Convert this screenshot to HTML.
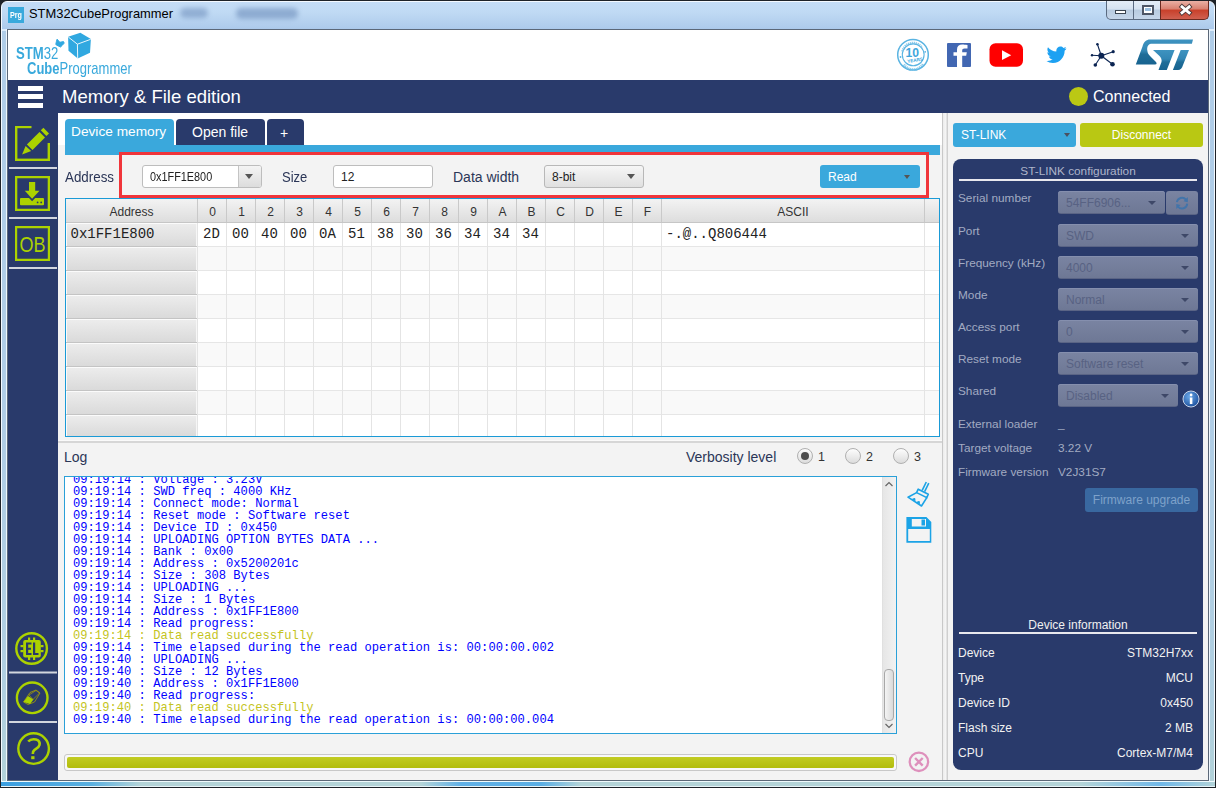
<!DOCTYPE html>
<html><head><meta charset="utf-8">
<style>
*{margin:0;padding:0;box-sizing:border-box}
html,body{width:1216px;height:788px;overflow:hidden;background:#6f8db0;font-family:"Liberation Sans",sans-serif}
.a{position:absolute}
.t{position:absolute;white-space:pre;line-height:1}
.mono{font-family:"Liberation Mono",monospace}
</style></head><body>
<!-- window frame -->
<div class="a" style="left:0;top:0;width:1216px;height:788px;background:#1e2228"></div>
<div class="a" style="left:1px;top:1px;width:1214px;height:786px;border-radius:6px 6px 0 0;background:linear-gradient(180deg,#c4dcf6 0px,#c0daf4 10px,#aecbec 26px,#a9c8ec 27px,#dcecfb 27.5px,#dcecfb 28.5px,#b0cde8 29px,#b0cde6 400px,#b0cfe0 700px,#b2d2d8 788px);border:1px solid #f4f9ff"></div>
<div class="a" style="left:180px;top:8px;width:28px;height:10px;border-radius:5px;background:#7d9cc6;filter:blur(2.5px);opacity:0.7"></div>
<div class="a" style="left:236px;top:8px;width:62px;height:11px;border-radius:5px;background:#7d9cc6;filter:blur(2.5px);opacity:0.75"></div>
<div class="a" style="left:1px;top:782px;width:1214px;height:5px;background:linear-gradient(90deg,#3a9ee0 0,#5ab0e0 90px,#b4d4d8 140px,#b4d4d8 420px,#60b0e6 460px,#5aaee4 540px,#b4d4d8 580px,#b4d4d8 1080px,#70b8e8 1160px,#b4d4d8 1216px)"></div>
<div class="a" style="left:1px;top:781px;width:1214px;height:1px;background:#f0fafc"></div>
<div class="a" style="left:1px;top:786px;width:1214px;height:1px;background:#e8f4f8"></div>
<div class="a" style="left:6px;top:29px;width:1px;height:753px;background:#eef6fd"></div>
<div class="a" style="left:1209px;top:29px;width:1px;height:753px;background:#eef6fd"></div>
<!-- titlebar -->
<div class="a" style="left:8px;top:7px;width:16px;height:16px;background:#39a9dc"></div>
<div class="t" style="left:10px;top:11px;font-size:9px;font-weight:bold;color:#fff;transform-origin:0 0;transform:scaleX(0.8)">Prg</div>
<div class="t" style="left:29px;top:8px;font-size:12.9px;color:#000">STM32CubeProgrammer</div>
<!-- window buttons -->
<div class="a" style="left:1106px;top:1px;width:28px;height:19px;border:1px solid #5a6a80;border-top:none;border-radius:0 0 0 5px;background:linear-gradient(180deg,#e4edf7 0,#d5e2f0 45%,#b8cbe0 50%,#c5d6ea 100%)"></div>
<div class="a" style="left:1133px;top:1px;width:28px;height:19px;border:1px solid #5a6a80;border-top:none;background:linear-gradient(180deg,#e4edf7 0,#d5e2f0 45%,#b8cbe0 50%,#c5d6ea 100%)"></div>
<div class="a" style="left:1160px;top:1px;width:49px;height:19px;border:1px solid #6a2a20;border-top:none;border-radius:0 0 5px 0;background:linear-gradient(180deg,#eab0a4 0,#d88070 45%,#c8402a 50%,#d06050 100%)"></div>
<div class="a" style="left:1115px;top:10px;width:11px;height:4px;background:#fff;border:1px solid #3a4450"></div>
<div class="a" style="left:1142px;top:5px;width:12px;height:10px;border:2px solid #4e5666;background:#fff"></div>
<div class="a" style="left:1145px;top:8px;width:6px;height:3px;background:#9cc0e0"></div>
<svg class="a" style="left:1176px;top:2px" width="20" height="16" viewBox="1176 2 20 16"><path d="M1182,6.8 L1189.2,12.8 M1189.2,6.8 L1182,12.8" stroke="#4a3838" stroke-width="4.6" stroke-linecap="square"/><path d="M1182,6.8 L1189.2,12.8 M1189.2,6.8 L1182,12.8" stroke="#fff" stroke-width="2.8" stroke-linecap="square"/></svg>

<!-- client area -->
<div class="a" style="left:7px;top:29px;width:1202px;height:752px;background:#fff;border:1px solid #5c6878"></div>
<!-- header white -->
<div class="a" id="header" style="left:8px;top:30px;width:1200px;height:50px;background:#fff"></div>
<!-- navy band -->
<div class="a" style="left:8px;top:80px;width:1200px;height:33px;background:#293a6b"></div>
<!-- sidebar -->
<div class="a" style="left:8px;top:113px;width:50px;height:667px;background:#293a6b"></div>
<!-- content bg -->
<div class="a" style="left:58px;top:113px;width:884px;height:667px;background:#f3f3f3"></div>
<div class="a" style="left:58px;top:113px;width:884px;height:32px;background:#fff"></div>
<!-- splitter -->
<div class="a" style="left:942px;top:113px;width:6px;height:667px;background:linear-gradient(90deg,#c8c8c8 0,#c8c8c8 1px,#ececec 1px,#f6f6f6 4px,#cfcfcf 5px)"></div>
<!-- right panel bg -->
<div class="a" style="left:948px;top:113px;width:260px;height:667px;background:#f3f3f3"></div>


<!-- logo -->
<div class="t" style="left:16.4px;top:45px;font-size:16.5px;color:#39a9dc;transform-origin:0 0;transform:scaleX(0.795);font-weight:bold">STM<span style="font-weight:normal">32</span></div>
<div class="t" style="left:27px;top:59.6px;font-size:17px;color:#39a9dc;transform-origin:0 0;transform:scaleX(0.765)"><b>Cube</b>Programmer</div>
<svg class="a" style="left:50px;top:30px" width="45" height="32" viewBox="50 30 45 32">
 <polygon points="80.3,32.8 90.9,39.1 90,52.8 77.7,58.5 68.5,50.7 68.1,36.7" fill="#30a8e0"/>
 <polyline points="68.3,37 77.4,44.2 90.7,39.3" fill="none" stroke="#fff" stroke-width="0.9"/>
 <line x1="77.4" y1="44.2" x2="77.7" y2="58.5" stroke="#fff" stroke-width="0.9"/>
 <path d="M57.1,39.2 L59.8,42.3 L63.5,41.6 L64.2,43.1 L62.3,45.3 L60.5,47 L57,45.3 L55.8,44.5 L56.4,41.5 Z" fill="#30a8e0" stroke="#30a8e0" stroke-width="1" stroke-linejoin="round"/>
</svg>
<!-- social -->
<svg class="a" style="left:890px;top:34px" width="320" height="44" viewBox="890 34 320 44">
 <circle cx="913" cy="54.8" r="15.3" fill="#fff" stroke="#5ab4e2" stroke-width="1.5"/>
 <circle cx="913.2" cy="54.8" r="10.9" fill="none" stroke="#5ab4e2" stroke-width="1.1"/>
 <path d="M903,50 A10.9,10.9 0 0 1 923,49" fill="none" stroke="#6dbde6" stroke-width="2.4" stroke-dasharray="1.2 0.7" transform="rotate(-8 913 54.8)" opacity="0.8"/>
 <path d="M904,61 A11,11 0 0 0 923,60" fill="none" stroke="#6dbde6" stroke-width="2.4" stroke-dasharray="1.2 0.7" transform="translate(0 3.5)" opacity="0.8"/>
 <circle cx="900.5" cy="57" r="0.9" fill="#5ab4e2"/><circle cx="925.2" cy="51.8" r="0.9" fill="#5ab4e2"/>
 <text x="912.2" y="57.4" font-family="Liberation Sans" font-weight="bold" font-size="12.8" fill="#3ea6dc" text-anchor="middle" transform="translate(912 0) scale(0.95 1) translate(-912 0)">10</text>
 <text x="915" y="61.8" font-family="Liberation Sans" font-weight="bold" font-size="4.6" fill="#3ea6dc" text-anchor="middle" transform="rotate(-8 915 60)">YEARS</text>
 <rect x="947" y="43" width="24" height="24" rx="1" fill="#4267b2"/>
 <path d="M957,67 V55.8 H953.5 V52.2 H957 V49.5 C957,46.2 959,44.5 962.3,44.5 C963.8,44.5 965.2,44.7 967.5,45 V48.4 H964.5 C962.8,48.4 962.2,49.2 962.2,50.5 V52.2 H966.8 L966.2,55.8 H962.2 V67 Z" fill="#fff"/>
 <rect x="989.5" y="43.3" width="33.5" height="23.5" rx="6" fill="#ff0000"/>
 <polygon points="1002,50.3 1011.2,55.2 1002,60" fill="#fff"/>
 <path d="M1066.5,48.5 C1065.8,48.8 1065,49 1064.2,49.1 C1065,48.6 1065.7,47.8 1066,46.9 C1065.2,47.4 1064.3,47.7 1063.4,47.9 C1062.6,47.1 1061.6,46.6 1060.4,46.6 C1058.2,46.6 1056.3,48.4 1056.3,50.7 C1056.3,51 1056.3,51.3 1056.4,51.6 C1053,51.4 1050,49.8 1048,47.3 C1047.6,47.9 1047.4,48.6 1047.4,49.4 C1047.4,50.8 1048.1,52.1 1049.2,52.8 C1048.5,52.8 1047.9,52.6 1047.4,52.3 C1047.4,54.3 1048.8,56 1050.7,56.4 C1050.3,56.5 1049.9,56.5 1049.6,56.5 C1049.3,56.5 1049.1,56.5 1048.8,56.4 C1049.3,58 1050.8,59.2 1052.6,59.3 C1051.2,60.4 1049.4,61 1047.5,61 C1047.2,61 1046.9,61 1046.5,61 C1048.3,62.2 1050.5,62.9 1052.9,62.9 C1060.4,62.9 1064.6,56.6 1064.6,51.2 L1064.6,50.7 C1065.4,50.1 1066,49.4 1066.5,48.5 Z" fill="#1da1f2"/>
 <g stroke="#0b2452" stroke-width="1.1">
  <line x1="1101.3" y1="55.8" x2="1097.4" y2="44.2"/><line x1="1101.3" y1="55.8" x2="1113.2" y2="51.7"/><line x1="1101.3" y1="55.8" x2="1092" y2="55.2"/><line x1="1101.3" y1="55.8" x2="1095.3" y2="65"/><line x1="1101.3" y1="55.8" x2="1112.5" y2="64.3"/>
 </g>
 <g fill="#0b2452"><circle cx="1101.3" cy="55.8" r="3"/><circle cx="1097.4" cy="44.2" r="1.3"/><circle cx="1113.2" cy="51.7" r="1.6"/><circle cx="1092" cy="55.2" r="1.2"/><circle cx="1095.3" cy="65" r="1.8"/><circle cx="1112.5" cy="64.3" r="2.3"/></g>
 <defs><linearGradient id="stg" x1="0" y1="0" x2="0" y2="1"><stop offset="0" stop-color="#3e93c0"/><stop offset="0.45" stop-color="#3286b4"/><stop offset="0.6" stop-color="#1f6d98"/><stop offset="1" stop-color="#176390"/></linearGradient></defs>
 <path d="M1150,39.5 L1193,39.5 L1191.9,43.8 L1151,43.8 C1148,44 1146.8,47.5 1147.3,50.5 C1147.6,53 1148.5,54.5 1150,56 L1156,62 Q1157.5,64.5 1155,64.5 L1135.8,64.5 L1142.5,46.5 C1143.5,42 1146.5,39.5 1150,39.5 Z" fill="url(#stg)"/>
 <path d="M1153,50.1 L1174.6,50.1 L1166.8,70 L1158.5,70 L1161.5,62 C1162,59.5 1161,57.5 1159.5,56 Z" fill="url(#stg)"/>
 <path d="M1180.7,50.1 L1189,50.1 L1183,65 C1182,68.5 1180.5,70 1178,70 L1172.9,70 Z" fill="url(#stg)"/>
</svg>
<!-- navy band contents -->
<div class="a" style="left:18px;top:86px;width:25px;height:5px;background:#fff"></div>
<div class="a" style="left:18px;top:94px;width:25px;height:5px;background:#fff"></div>
<div class="a" style="left:18px;top:103px;width:25px;height:5px;background:#fff"></div>
<div class="t" style="left:62px;top:87.5px;font-size:18.5px;color:#fff">Memory &amp; File edition</div>
<div class="a" style="left:1069px;top:87px;width:19px;height:19px;border-radius:50%;background:#bbc814"></div>
<div class="t" style="left:1093px;top:89px;font-size:16px;color:#fff">Connected</div>
<!-- sidebar icons -->
<svg class="a" style="left:8px;top:113px" width="50" height="667" viewBox="8 113 50 667">
 <g fill="#acd200">
  <rect x="15" y="126" width="16.5" height="2.2"/><rect x="15" y="126" width="2.4" height="35"/><rect x="15" y="158.6" width="35" height="2.4"/><rect x="47.6" y="143" width="2.4" height="18"/>
  <polygon points="22.1,154.5 25.6,146 31.2,151"/>
  <polygon points="26.9,144.4 39.5,131.9 45,137.5 32.5,150"/>
  <polygon points="40.8,130.3 43.4,127.8 49,133.5 46.4,136.1"/>
  <path d="M15,176 H50 V211 H15 Z M17.3,178.3 V208.7 H47.7 V178.3 Z" fill-rule="evenodd"/>
  <rect x="29" y="182" width="6.2" height="9"/>
  <polygon points="24.8,190.7 39.5,190.7 32.1,198.7"/>
  <path d="M21,198 H29 L32.1,201.2 L35.2,198 H43 Q44,198 44,199 V204.3 Q44,205.3 43,205.3 H21 Q20,205.3 20,204.3 V199 Q20,198 21,198 Z"/>
  <path d="M15,226 H50 V261 H15 Z M17.2,228.2 V258.8 H47.8 V228.2 Z" fill-rule="evenodd"/>
 </g>
 <circle cx="37.6" cy="202.4" r="0.9" fill="#293a6b"/><circle cx="41.2" cy="202.4" r="0.9" fill="#293a6b"/>
 <text x="32.5" y="251.8" font-family="Liberation Sans" font-size="21.5" fill="#acd200" text-anchor="middle" transform="translate(32.5 0) scale(0.84 1) translate(-32.5 0)">OB</text>
 <g fill="#d2d6de"><rect x="9" y="167" width="48" height="2"/><rect x="9" y="217" width="48" height="2"/><rect x="9" y="267" width="48" height="2"/><rect x="9" y="671.5" width="48" height="2"/><rect x="9" y="721" width="48" height="2"/></g>
 <g fill="none" stroke="#acd200" stroke-width="2.4">
  <circle cx="31.6" cy="648.5" r="15.3"/>
  <circle cx="32.2" cy="697.8" r="15.3"/>
  <circle cx="33.6" cy="748.6" r="15.3"/>
 </g>
 <g fill="#acd200">
  <rect x="23.2" y="640" width="17.6" height="17.6" rx="2"/>
  <rect x="28" y="637.5" width="2.2" height="3"/><rect x="33" y="637.5" width="2.2" height="3"/>
  <rect x="28" y="657" width="2.2" height="3"/><rect x="33" y="657" width="2.2" height="3"/>
  <rect x="20.5" y="645" width="3" height="2.2"/><rect x="20.5" y="650" width="3" height="2.2"/>
  <rect x="40.5" y="645" width="3" height="2.2"/><rect x="40.5" y="650" width="3" height="2.2"/>
 </g>
 <g fill="#293a6b">
  <path d="M26,642.5 H31.5 V644.5 H28.2 V647.8 H31 V649.8 H28.2 V653 H31.5 V655 H26 Z"/>
  <path d="M33,642.5 H35.2 V653 H38.5 V655 H33 Z"/>
 </g>
 <path d="M23.5,702 L30,692.5 L36,690 L40,693 L34.5,702 L28,704.5 Z" fill="none" stroke="#a8a000" stroke-width="0.8"/>
 <path d="M23.5,702 L28,696 L33.5,699.5 L30,704 Z" fill="#acd200"/>
 <path d="M29,695 L36,690.5 L39.5,693 L33,699.5 Z" fill="none" stroke="#a8a000" stroke-width="0.7"/>
 <path d="M28.2,741.5 C30,739.5 33,738.8 36,739.5 C39,740.3 40,742.5 39.5,745 C39,747.5 36.5,748.5 34.5,749.8 C33,750.8 32.8,752 32.8,754" fill="none" stroke="#acd200" stroke-width="2.6"/>
 <rect x="31.2" y="756.2" width="3.3" height="3" fill="#acd200"/>
</svg>

<!-- tabs -->
<div class="a" style="left:65px;top:119px;width:109px;height:27px;background:#3aa8dc;border-radius:4px 4px 0 0"></div>
<div class="t" style="left:71px;top:125px;font-size:13.7px;color:#fff">Device memory</div>
<div class="a" style="left:176px;top:119px;width:89px;height:26px;background:#293a6b;border-radius:4px 4px 0 0"></div>
<div class="t" style="left:192px;top:125px;font-size:14px;color:#fff">Open file</div>
<div class="a" style="left:267px;top:119px;width:37px;height:26px;background:#293a6b;border-radius:4px 4px 0 0"></div>
<div class="t" style="left:280px;top:126px;font-size:14px;color:#fff">+</div>
<div class="a" style="left:65px;top:145px;width:875px;height:10px;background:#3aa8dc"></div>
<!-- address row -->
<div class="t" style="left:65px;top:170.2px;font-size:14px;color:#2b3657;transform-origin:0 0;transform:scaleX(0.955)">Address</div>
<div class="a" style="left:142px;top:165px;width:120px;height:23px;background:#fff;border:1px solid #bdbdbd;border-radius:3px"></div>
<div class="a" style="left:238px;top:166px;width:23px;height:21px;background:linear-gradient(#f4f4f4,#dcdcdc);border-left:1px solid #c4c4c4;border-radius:0 2px 2px 0"></div>
<div class="a" style="left:245px;top:174px;width:0;height:0;border-left:4.5px solid transparent;border-right:4.5px solid transparent;border-top:5px solid #555"></div>
<div class="t" style="left:150px;top:171px;font-size:12px;color:#222;transform-origin:0 0;transform:scaleX(0.905)">0x1FF1E800</div>
<div class="t" style="left:282px;top:170.2px;font-size:14px;color:#2b3657;transform-origin:0 0;transform:scaleX(0.93)">Size</div>
<div class="a" style="left:333px;top:165px;width:100px;height:23px;background:#fff;border:1px solid #bdbdbd;border-radius:3px"></div>
<div class="t" style="left:341px;top:171px;font-size:12px;color:#222">12</div>
<div class="t" style="left:453px;top:170.2px;font-size:14px;color:#2b3657">Data width</div>
<div class="a" style="left:544px;top:165px;width:100px;height:23px;background:linear-gradient(#f6f6f6,#e0e0e0);border:1px solid #b8b8b8;border-radius:3px"></div>
<div class="t" style="left:552px;top:171px;font-size:12px;color:#222">8-bit</div>
<div class="a" style="left:627px;top:174px;width:0;height:0;border-left:4.5px solid transparent;border-right:4.5px solid transparent;border-top:5px solid #555"></div>
<div class="a" style="left:820px;top:165px;width:100px;height:23px;background:#3aa8dc;border-radius:3px"></div>
<div class="t" style="left:828px;top:171px;font-size:12px;color:#fff">Read</div>
<div class="a" style="left:904px;top:175px;width:0;height:0;border-left:3.5px solid transparent;border-right:3.5px solid transparent;border-top:4px solid #555"></div>
<!-- table -->
<div class="a" style="left:65px;top:198px;width:875px;height:239px;border:1px solid #1a9ad6;background:#fff"></div>
<div class="a" style="left:198px;top:223px;width:741px;height:24px;background:#fff;border-bottom:1px solid #e6e6e6;"></div>
<div class="a" style="left:66px;top:223px;width:131px;height:24px;background:linear-gradient(#ededed,#dadada);box-shadow:inset 1px 1px 0 #fbfbfb,inset -1px 0 0 #f6f6f6;border-bottom:1px solid #c4c4c4;"></div>
<div class="a" style="left:198px;top:247px;width:741px;height:24px;background:#f9f9f9;border-bottom:1px solid #e6e6e6;"></div>
<div class="a" style="left:66px;top:247px;width:131px;height:24px;background:linear-gradient(#ededed,#dadada);box-shadow:inset 1px 1px 0 #fbfbfb,inset -1px 0 0 #f6f6f6;border-bottom:1px solid #c4c4c4;"></div>
<div class="a" style="left:198px;top:271px;width:741px;height:24px;background:#fff;border-bottom:1px solid #e6e6e6;"></div>
<div class="a" style="left:66px;top:271px;width:131px;height:24px;background:linear-gradient(#ededed,#dadada);box-shadow:inset 1px 1px 0 #fbfbfb,inset -1px 0 0 #f6f6f6;border-bottom:1px solid #c4c4c4;"></div>
<div class="a" style="left:198px;top:295px;width:741px;height:24px;background:#f9f9f9;border-bottom:1px solid #e6e6e6;"></div>
<div class="a" style="left:66px;top:295px;width:131px;height:24px;background:linear-gradient(#ededed,#dadada);box-shadow:inset 1px 1px 0 #fbfbfb,inset -1px 0 0 #f6f6f6;border-bottom:1px solid #c4c4c4;"></div>
<div class="a" style="left:198px;top:319px;width:741px;height:24px;background:#fff;border-bottom:1px solid #e6e6e6;"></div>
<div class="a" style="left:66px;top:319px;width:131px;height:24px;background:linear-gradient(#ededed,#dadada);box-shadow:inset 1px 1px 0 #fbfbfb,inset -1px 0 0 #f6f6f6;border-bottom:1px solid #c4c4c4;"></div>
<div class="a" style="left:198px;top:343px;width:741px;height:24px;background:#f9f9f9;border-bottom:1px solid #e6e6e6;"></div>
<div class="a" style="left:66px;top:343px;width:131px;height:24px;background:linear-gradient(#ededed,#dadada);box-shadow:inset 1px 1px 0 #fbfbfb,inset -1px 0 0 #f6f6f6;border-bottom:1px solid #c4c4c4;"></div>
<div class="a" style="left:198px;top:367px;width:741px;height:24px;background:#fff;border-bottom:1px solid #e6e6e6;"></div>
<div class="a" style="left:66px;top:367px;width:131px;height:24px;background:linear-gradient(#ededed,#dadada);box-shadow:inset 1px 1px 0 #fbfbfb,inset -1px 0 0 #f6f6f6;border-bottom:1px solid #c4c4c4;"></div>
<div class="a" style="left:198px;top:391px;width:741px;height:24px;background:#f9f9f9;border-bottom:1px solid #e6e6e6;"></div>
<div class="a" style="left:66px;top:391px;width:131px;height:24px;background:linear-gradient(#ededed,#dadada);box-shadow:inset 1px 1px 0 #fbfbfb,inset -1px 0 0 #f6f6f6;border-bottom:1px solid #c4c4c4;"></div>
<div class="a" style="left:198px;top:415px;width:741px;height:21px;background:#fff;"></div>
<div class="a" style="left:66px;top:415px;width:131px;height:21px;background:linear-gradient(#ededed,#dadada);box-shadow:inset 1px 1px 0 #fbfbfb,inset -1px 0 0 #f6f6f6;"></div>
<div class="a" style="left:197px;top:223px;width:1px;height:213px;background:#e4e4e4"></div>
<div class="a" style="left:226px;top:223px;width:1px;height:213px;background:#e4e4e4"></div>
<div class="a" style="left:255px;top:223px;width:1px;height:213px;background:#e4e4e4"></div>
<div class="a" style="left:284px;top:223px;width:1px;height:213px;background:#e4e4e4"></div>
<div class="a" style="left:313px;top:223px;width:1px;height:213px;background:#e4e4e4"></div>
<div class="a" style="left:342px;top:223px;width:1px;height:213px;background:#e4e4e4"></div>
<div class="a" style="left:371px;top:223px;width:1px;height:213px;background:#e4e4e4"></div>
<div class="a" style="left:400px;top:223px;width:1px;height:213px;background:#e4e4e4"></div>
<div class="a" style="left:429px;top:223px;width:1px;height:213px;background:#e4e4e4"></div>
<div class="a" style="left:458px;top:223px;width:1px;height:213px;background:#e4e4e4"></div>
<div class="a" style="left:487px;top:223px;width:1px;height:213px;background:#e4e4e4"></div>
<div class="a" style="left:516px;top:223px;width:1px;height:213px;background:#e4e4e4"></div>
<div class="a" style="left:545px;top:223px;width:1px;height:213px;background:#e4e4e4"></div>
<div class="a" style="left:574px;top:223px;width:1px;height:213px;background:#e4e4e4"></div>
<div class="a" style="left:603px;top:223px;width:1px;height:213px;background:#e4e4e4"></div>
<div class="a" style="left:632px;top:223px;width:1px;height:213px;background:#e4e4e4"></div>
<div class="a" style="left:661px;top:223px;width:1px;height:213px;background:#e4e4e4"></div>
<div class="a" style="left:924px;top:223px;width:1px;height:213px;background:#e4e4e4"></div>
<div class="a" style="left:66px;top:199px;width:873px;height:24px;background:linear-gradient(#f3f3f3,#dddddd);border-bottom:1px solid #c6c6c6"></div>
<div class="a" style="left:197px;top:199px;width:1px;height:23px;background:#c9c9c9"></div>
<div class="a" style="left:226px;top:199px;width:1px;height:23px;background:#c9c9c9"></div>
<div class="a" style="left:255px;top:199px;width:1px;height:23px;background:#c9c9c9"></div>
<div class="a" style="left:284px;top:199px;width:1px;height:23px;background:#c9c9c9"></div>
<div class="a" style="left:313px;top:199px;width:1px;height:23px;background:#c9c9c9"></div>
<div class="a" style="left:342px;top:199px;width:1px;height:23px;background:#c9c9c9"></div>
<div class="a" style="left:371px;top:199px;width:1px;height:23px;background:#c9c9c9"></div>
<div class="a" style="left:400px;top:199px;width:1px;height:23px;background:#c9c9c9"></div>
<div class="a" style="left:429px;top:199px;width:1px;height:23px;background:#c9c9c9"></div>
<div class="a" style="left:458px;top:199px;width:1px;height:23px;background:#c9c9c9"></div>
<div class="a" style="left:487px;top:199px;width:1px;height:23px;background:#c9c9c9"></div>
<div class="a" style="left:516px;top:199px;width:1px;height:23px;background:#c9c9c9"></div>
<div class="a" style="left:545px;top:199px;width:1px;height:23px;background:#c9c9c9"></div>
<div class="a" style="left:574px;top:199px;width:1px;height:23px;background:#c9c9c9"></div>
<div class="a" style="left:603px;top:199px;width:1px;height:23px;background:#c9c9c9"></div>
<div class="a" style="left:632px;top:199px;width:1px;height:23px;background:#c9c9c9"></div>
<div class="a" style="left:661px;top:199px;width:1px;height:23px;background:#c9c9c9"></div>
<div class="a" style="left:924px;top:199px;width:1px;height:23px;background:#c9c9c9"></div>
<div class="t" style="left:66px;top:206px;width:131px;text-align:center;font-size:12px;color:#333">Address</div>
<div class="t" style="left:198px;top:206px;width:29px;text-align:center;font-size:12px;color:#333">0</div>
<div class="t" style="left:227px;top:206px;width:29px;text-align:center;font-size:12px;color:#333">1</div>
<div class="t" style="left:256px;top:206px;width:29px;text-align:center;font-size:12px;color:#333">2</div>
<div class="t" style="left:285px;top:206px;width:29px;text-align:center;font-size:12px;color:#333">3</div>
<div class="t" style="left:314px;top:206px;width:29px;text-align:center;font-size:12px;color:#333">4</div>
<div class="t" style="left:343px;top:206px;width:29px;text-align:center;font-size:12px;color:#333">5</div>
<div class="t" style="left:372px;top:206px;width:29px;text-align:center;font-size:12px;color:#333">6</div>
<div class="t" style="left:401px;top:206px;width:29px;text-align:center;font-size:12px;color:#333">7</div>
<div class="t" style="left:430px;top:206px;width:29px;text-align:center;font-size:12px;color:#333">8</div>
<div class="t" style="left:459px;top:206px;width:29px;text-align:center;font-size:12px;color:#333">9</div>
<div class="t" style="left:488px;top:206px;width:29px;text-align:center;font-size:12px;color:#333">A</div>
<div class="t" style="left:517px;top:206px;width:29px;text-align:center;font-size:12px;color:#333">B</div>
<div class="t" style="left:546px;top:206px;width:29px;text-align:center;font-size:12px;color:#333">C</div>
<div class="t" style="left:575px;top:206px;width:29px;text-align:center;font-size:12px;color:#333">D</div>
<div class="t" style="left:604px;top:206px;width:29px;text-align:center;font-size:12px;color:#333">E</div>
<div class="t" style="left:633px;top:206px;width:29px;text-align:center;font-size:12px;color:#333">F</div>
<div class="t" style="left:662px;top:206px;width:262px;text-align:center;font-size:12px;color:#333">ASCII</div>
<div class="t mono" style="left:70.5px;top:227px;font-size:14px;color:#222">0x1FF1E800</div>
<div class="t mono" style="left:197px;top:227px;width:29px;text-align:center;font-size:14px;color:#222">2D</div>
<div class="t mono" style="left:226px;top:227px;width:29px;text-align:center;font-size:14px;color:#222">00</div>
<div class="t mono" style="left:255px;top:227px;width:29px;text-align:center;font-size:14px;color:#222">40</div>
<div class="t mono" style="left:284px;top:227px;width:29px;text-align:center;font-size:14px;color:#222">00</div>
<div class="t mono" style="left:313px;top:227px;width:29px;text-align:center;font-size:14px;color:#222">0A</div>
<div class="t mono" style="left:342px;top:227px;width:29px;text-align:center;font-size:14px;color:#222">51</div>
<div class="t mono" style="left:371px;top:227px;width:29px;text-align:center;font-size:14px;color:#222">38</div>
<div class="t mono" style="left:400px;top:227px;width:29px;text-align:center;font-size:14px;color:#222">30</div>
<div class="t mono" style="left:429px;top:227px;width:29px;text-align:center;font-size:14px;color:#222">36</div>
<div class="t mono" style="left:458px;top:227px;width:29px;text-align:center;font-size:14px;color:#222">34</div>
<div class="t mono" style="left:487px;top:227px;width:29px;text-align:center;font-size:14px;color:#222">34</div>
<div class="t mono" style="left:516px;top:227px;width:29px;text-align:center;font-size:14px;color:#222">34</div>
<div class="t mono" style="left:666px;top:227px;font-size:14px;color:#222">-.@..Q806444</div>
<div class="a" style="left:119px;top:152px;width:810px;height:46px;border:3px solid #f0353a"></div>

<!-- splitter between table and log -->
<div class="a" style="left:58px;top:440px;width:884px;height:1px;background:#fafafa"></div>
<div class="a" style="left:58px;top:441px;width:884px;height:2px;background:#d6d6d6"></div>
<div class="t" style="left:64px;top:450px;font-size:14px;color:#2b3657">Log</div>
<div class="t" style="left:686px;top:450.3px;font-size:14px;color:#2b3657">Verbosity level</div>
<div class="a" style="left:797px;top:448px;width:16px;height:16px;border-radius:50%;background:linear-gradient(#fdfdfd,#dcdcdc);border:1px solid #b0b0b0"></div>
<div class="a" style="left:801px;top:452px;width:8px;height:8px;border-radius:50%;background:#4e4e4e"></div>
<div class="t" style="left:818px;top:451px;font-size:12.5px;color:#333">1</div>
<div class="a" style="left:845px;top:448px;width:16px;height:16px;border-radius:50%;background:linear-gradient(#fdfdfd,#dcdcdc);border:1px solid #b0b0b0"></div>
<div class="t" style="left:866px;top:451px;font-size:12.5px;color:#333">2</div>
<div class="a" style="left:893px;top:448px;width:16px;height:16px;border-radius:50%;background:linear-gradient(#fdfdfd,#dcdcdc);border:1px solid #b0b0b0"></div>
<div class="t" style="left:914px;top:451px;font-size:12.5px;color:#333">3</div>
<!-- log area -->
<div class="a" style="left:64px;top:476px;width:833px;height:258px;border:1px solid #2aa0d8;background:#fff;overflow:hidden">
 <div class="mono" style="position:absolute;left:8px;top:-3.5px;font-size:12.1px;line-height:13px;white-space:pre;transform-origin:0 0;transform:none;letter-spacing:0.03px;color:#0000ff">09:19:14 : Voltage : 3.23V</div>
<div class="mono" style="position:absolute;left:8px;top:8.5px;font-size:12.1px;line-height:13px;white-space:pre;transform-origin:0 0;transform:none;letter-spacing:0.03px;color:#0000ff">09:19:14 : SWD freq : 4000 KHz</div>
<div class="mono" style="position:absolute;left:8px;top:20.5px;font-size:12.1px;line-height:13px;white-space:pre;transform-origin:0 0;transform:none;letter-spacing:0.03px;color:#0000ff">09:19:14 : Connect mode: Normal</div>
<div class="mono" style="position:absolute;left:8px;top:32.5px;font-size:12.1px;line-height:13px;white-space:pre;transform-origin:0 0;transform:none;letter-spacing:0.03px;color:#0000ff">09:19:14 : Reset mode : Software reset</div>
<div class="mono" style="position:absolute;left:8px;top:44.5px;font-size:12.1px;line-height:13px;white-space:pre;transform-origin:0 0;transform:none;letter-spacing:0.03px;color:#0000ff">09:19:14 : Device ID : 0x450</div>
<div class="mono" style="position:absolute;left:8px;top:56.5px;font-size:12.1px;line-height:13px;white-space:pre;transform-origin:0 0;transform:none;letter-spacing:0.03px;color:#0000ff">09:19:14 : UPLOADING OPTION BYTES DATA ...</div>
<div class="mono" style="position:absolute;left:8px;top:68.5px;font-size:12.1px;line-height:13px;white-space:pre;transform-origin:0 0;transform:none;letter-spacing:0.03px;color:#0000ff">09:19:14 : Bank : 0x00</div>
<div class="mono" style="position:absolute;left:8px;top:80.5px;font-size:12.1px;line-height:13px;white-space:pre;transform-origin:0 0;transform:none;letter-spacing:0.03px;color:#0000ff">09:19:14 : Address : 0x5200201c</div>
<div class="mono" style="position:absolute;left:8px;top:92.5px;font-size:12.1px;line-height:13px;white-space:pre;transform-origin:0 0;transform:none;letter-spacing:0.03px;color:#0000ff">09:19:14 : Size : 308 Bytes</div>
<div class="mono" style="position:absolute;left:8px;top:104.5px;font-size:12.1px;line-height:13px;white-space:pre;transform-origin:0 0;transform:none;letter-spacing:0.03px;color:#0000ff">09:19:14 : UPLOADING ...</div>
<div class="mono" style="position:absolute;left:8px;top:116.5px;font-size:12.1px;line-height:13px;white-space:pre;transform-origin:0 0;transform:none;letter-spacing:0.03px;color:#0000ff">09:19:14 : Size : 1 Bytes</div>
<div class="mono" style="position:absolute;left:8px;top:128.5px;font-size:12.1px;line-height:13px;white-space:pre;transform-origin:0 0;transform:none;letter-spacing:0.03px;color:#0000ff">09:19:14 : Address : 0x1FF1E800</div>
<div class="mono" style="position:absolute;left:8px;top:140.5px;font-size:12.1px;line-height:13px;white-space:pre;transform-origin:0 0;transform:none;letter-spacing:0.03px;color:#0000ff">09:19:14 : Read progress:</div>
<div class="mono" style="position:absolute;left:8px;top:152.5px;font-size:12.1px;line-height:13px;white-space:pre;transform-origin:0 0;transform:none;letter-spacing:0.03px;color:#c4c41e">09:19:14 : Data read successfully</div>
<div class="mono" style="position:absolute;left:8px;top:164.5px;font-size:12.1px;line-height:13px;white-space:pre;transform-origin:0 0;transform:none;letter-spacing:0.03px;color:#0000ff">09:19:14 : Time elapsed during the read operation is: 00:00:00.002</div>
<div class="mono" style="position:absolute;left:8px;top:176.5px;font-size:12.1px;line-height:13px;white-space:pre;transform-origin:0 0;transform:none;letter-spacing:0.03px;color:#0000ff">09:19:40 : UPLOADING ...</div>
<div class="mono" style="position:absolute;left:8px;top:188.5px;font-size:12.1px;line-height:13px;white-space:pre;transform-origin:0 0;transform:none;letter-spacing:0.03px;color:#0000ff">09:19:40 : Size : 12 Bytes</div>
<div class="mono" style="position:absolute;left:8px;top:200.5px;font-size:12.1px;line-height:13px;white-space:pre;transform-origin:0 0;transform:none;letter-spacing:0.03px;color:#0000ff">09:19:40 : Address : 0x1FF1E800</div>
<div class="mono" style="position:absolute;left:8px;top:212.5px;font-size:12.1px;line-height:13px;white-space:pre;transform-origin:0 0;transform:none;letter-spacing:0.03px;color:#0000ff">09:19:40 : Read progress:</div>
<div class="mono" style="position:absolute;left:8px;top:224.5px;font-size:12.1px;line-height:13px;white-space:pre;transform-origin:0 0;transform:none;letter-spacing:0.03px;color:#c4c41e">09:19:40 : Data read successfully</div>
<div class="mono" style="position:absolute;left:8px;top:236.5px;font-size:12.1px;line-height:13px;white-space:pre;transform-origin:0 0;transform:none;letter-spacing:0.03px;color:#0000ff">09:19:40 : Time elapsed during the read operation is: 00:00:00.004</div>
 <div style="position:absolute;right:0;top:0;width:14px;height:256px;background:linear-gradient(90deg,#e6e6e6,#f2f2f2);border-left:1px solid #e0e0e0"></div>
 <div style="position:absolute;right:2px;top:192px;width:10px;height:52px;border-radius:4px;background:linear-gradient(90deg,#f4f4f4,#dadada);border:1px solid #a8a8a8"></div>
</div>
<svg class="a" style="left:882px;top:477px" width="14" height="256" viewBox="0 0 14 256"><polyline points="3.5,9 7,5.5 10.5,9" fill="none" stroke="#666" stroke-width="1.2"/><polyline points="3.5,247 7,250.5 10.5,247" fill="none" stroke="#666" stroke-width="1.2"/></svg>
<!-- log tool icons -->
<svg class="a" style="left:902px;top:478px" width="34" height="70" viewBox="902 478 34 70">
 <g fill="none" stroke="#1ba3e6" stroke-width="1.6" stroke-linejoin="round">
  <line x1="926.3" y1="482" x2="922.2" y2="490.4"/><line x1="928.8" y1="483.2" x2="924.6" y2="491.6"/>
  <polygon points="918.2,489.2 928.3,494.2 926.8,497.6 916.6,492.6"/>
  <path d="M916.6,492.6 L908,497.2 L921.5,506 L926.8,497.6"/>
  <path d="M912.5,499.5 L914.5,498.8 L914.8,500.8 M917,502.5 L919,501.8 L919.3,503.8"/>
 </g>
 <path d="M906.4,517 H926.4 L931.3,522 V542.8 H906.4 Z M911.8,518.9 V526.4 H926 V518.9 Z M908.2,529 V541 H929.8 V529 Z" fill="#1ba3e6" fill-rule="evenodd"/>
 <rect x="921.5" y="519.5" width="3.5" height="6" fill="#1ba3e6"/>
</svg>
<!-- progress bar -->
<div class="a" style="left:64px;top:754px;width:833px;height:17px;border-radius:3px;background:#f8f8f8;border:1px solid #c8c8c8"></div>
<div class="a" style="left:67px;top:757px;width:827px;height:11px;border-radius:2px;background:linear-gradient(#c2cc22,#b2bc0c)"></div>
<svg class="a" style="left:906px;top:749px" width="26" height="26" viewBox="906 749 26 26"><circle cx="918.9" cy="761.8" r="9.2" fill="none" stroke="#de90bc" stroke-width="2.3"/><path d="M915.1,758 L922.7,765.6 M922.7,758 L915.1,765.6" stroke="#de90bc" stroke-width="2.4"/></svg>
<!-- right panel -->
<div class="a" style="left:953px;top:123px;width:123px;height:24px;border-radius:3px;background:#3aa8dc"></div>
<div class="t" style="left:961px;top:129px;font-size:12px;color:#fff">ST-LINK</div>
<div class="a" style="left:1064px;top:133px;width:0;height:0;border-left:3.5px solid transparent;border-right:3.5px solid transparent;border-top:4px solid #4a5060"></div>
<div class="a" style="left:1080px;top:123px;width:123px;height:24px;border-radius:3px;background:#b9c813"></div>
<div class="t" style="left:1080px;top:129px;width:123px;text-align:center;font-size:12px;color:#fff">Disconnect</div>
<div class="a" style="left:953px;top:159px;width:250px;height:611px;border-radius:8px;background:#293a6b"></div>
<div class="t" style="left:953px;top:166px;width:250px;text-align:center;font-size:11.8px;color:#aeb5ca">ST-LINK configuration</div>
<div class="a" style="left:959px;top:179px;width:238px;height:2px;background:#e8e8ee"></div>
<div class="t" style="left:958px;top:193px;font-size:11.8px;color:#a2abc2">Serial number</div>
<div class="t" style="left:958px;top:226px;font-size:11.8px;color:#a2abc2">Port</div>
<div class="t" style="left:958px;top:258px;font-size:11.8px;color:#a2abc2">Frequency (kHz)</div>
<div class="t" style="left:958px;top:290px;font-size:11.8px;color:#a2abc2">Mode</div>
<div class="t" style="left:958px;top:322px;font-size:11.8px;color:#a2abc2">Access port</div>
<div class="t" style="left:958px;top:354px;font-size:11.8px;color:#a2abc2">Reset mode</div>
<div class="t" style="left:958px;top:386px;font-size:11.8px;color:#a2abc2">Shared</div>
<div class="a" style="left:1058px;top:191px;width:107px;height:23px;border-radius:3px;background:linear-gradient(#7a84a2,#6e7895);border-bottom:1.5px solid #5a6485;box-shadow:inset 0 1px 0 #858fae"></div><div class="t" style="left:1066px;top:197.3px;font-size:12px;color:#586283">54FF6906...</div><div class="a" style="left:1148px;top:201px;width:0;height:0;border-left:4px solid transparent;border-right:4px solid transparent;border-top:4.5px solid #3e4868"></div>
<div class="a" style="left:1166px;top:191px;width:32px;height:24px;border-radius:3px;background:linear-gradient(#7a84a2,#6e7895);border-bottom:1.5px solid #5a6485"></div>
<svg class="a" style="left:1172px;top:194px" width="20" height="18" viewBox="1172 194 20 18"><g fill="none" stroke="#4274aa" stroke-width="1.9"><path d="M1176.9,202.2 A5.2,5.2 0 0 1 1186,199.6"/><path d="M1187.2,203.6 A5.2,5.2 0 0 1 1178,206.6"/></g><polygon points="1183.5,201.3 1187.8,197 1187.8,202.2" fill="#4274aa"/><polygon points="1180.5,205 1176.3,209 1176.3,204" fill="#4274aa"/></svg>
<div class="a" style="left:1058px;top:224px;width:140px;height:23px;border-radius:3px;background:linear-gradient(#7a84a2,#6e7895);border-bottom:1.5px solid #5a6485;box-shadow:inset 0 1px 0 #858fae"></div><div class="t" style="left:1066px;top:230.3px;font-size:12px;color:#586283">SWD</div><div class="a" style="left:1181px;top:234px;width:0;height:0;border-left:4px solid transparent;border-right:4px solid transparent;border-top:4.5px solid #3e4868"></div>
<div class="a" style="left:1058px;top:256px;width:140px;height:23px;border-radius:3px;background:linear-gradient(#7a84a2,#6e7895);border-bottom:1.5px solid #5a6485;box-shadow:inset 0 1px 0 #858fae"></div><div class="t" style="left:1066px;top:262.3px;font-size:12px;color:#586283">4000</div><div class="a" style="left:1181px;top:266px;width:0;height:0;border-left:4px solid transparent;border-right:4px solid transparent;border-top:4.5px solid #3e4868"></div>
<div class="a" style="left:1058px;top:288px;width:140px;height:23px;border-radius:3px;background:linear-gradient(#7a84a2,#6e7895);border-bottom:1.5px solid #5a6485;box-shadow:inset 0 1px 0 #858fae"></div><div class="t" style="left:1066px;top:294.3px;font-size:12px;color:#586283">Normal</div><div class="a" style="left:1181px;top:298px;width:0;height:0;border-left:4px solid transparent;border-right:4px solid transparent;border-top:4.5px solid #3e4868"></div>
<div class="a" style="left:1058px;top:320px;width:140px;height:23px;border-radius:3px;background:linear-gradient(#7a84a2,#6e7895);border-bottom:1.5px solid #5a6485;box-shadow:inset 0 1px 0 #858fae"></div><div class="t" style="left:1066px;top:326.3px;font-size:12px;color:#586283">0</div><div class="a" style="left:1181px;top:330px;width:0;height:0;border-left:4px solid transparent;border-right:4px solid transparent;border-top:4.5px solid #3e4868"></div>
<div class="a" style="left:1058px;top:352px;width:140px;height:23px;border-radius:3px;background:linear-gradient(#7a84a2,#6e7895);border-bottom:1.5px solid #5a6485;box-shadow:inset 0 1px 0 #858fae"></div><div class="t" style="left:1066px;top:358.3px;font-size:12px;color:#586283">Software reset</div><div class="a" style="left:1181px;top:362px;width:0;height:0;border-left:4px solid transparent;border-right:4px solid transparent;border-top:4.5px solid #3e4868"></div>
<div class="a" style="left:1058px;top:384px;width:120px;height:23px;border-radius:3px;background:linear-gradient(#7a84a2,#6e7895);border-bottom:1.5px solid #5a6485;box-shadow:inset 0 1px 0 #858fae"></div><div class="t" style="left:1066px;top:390.3px;font-size:12px;color:#586283">Disabled</div><div class="a" style="left:1161px;top:394px;width:0;height:0;border-left:4px solid transparent;border-right:4px solid transparent;border-top:4.5px solid #3e4868"></div>
<svg class="a" style="left:1182px;top:390px" width="18" height="18" viewBox="0 0 18 18"><defs><radialGradient id="ig" cx="0.4" cy="0.35" r="0.7"><stop offset="0" stop-color="#6aa8e8"/><stop offset="1" stop-color="#1a4e9c"/></radialGradient></defs><circle cx="9" cy="9" r="8" fill="url(#ig)" stroke="#c8d4e8" stroke-width="1"/><rect x="7.8" y="7.5" width="2.6" height="6.5" fill="#fff"/><circle cx="9.1" cy="5" r="1.4" fill="#fff"/></svg>
<div class="t" style="left:958px;top:419px;font-size:11.8px;color:#a2abc2">External loader</div>
<div class="t" style="left:1058px;top:419px;font-size:11.8px;color:#a2abc2">_</div>
<div class="t" style="left:958px;top:443px;font-size:11.8px;color:#a2abc2">Target voltage</div>
<div class="t" style="left:1058px;top:443px;font-size:11.8px;color:#a2abc2">3.22 V</div>
<div class="t" style="left:958px;top:467px;font-size:11.8px;color:#a2abc2">Firmware version</div>
<div class="t" style="left:1058px;top:467px;font-size:11.8px;color:#a2abc2">V2J31S7</div>
<div class="a" style="left:1085px;top:488px;width:113px;height:24px;border-radius:3px;background:#3968a0"></div>
<div class="t" style="left:1085px;top:494px;width:113px;text-align:center;font-size:12px;color:#7ea2ca">Firmware upgrade</div>
<div class="t" style="left:953px;top:619px;width:250px;text-align:center;font-size:12px;color:#f0f0f0">Device information</div>
<div class="a" style="left:959px;top:632px;width:238px;height:2px;background:#e8e8ee"></div>
<div class="t" style="left:958px;top:647px;font-size:12px;color:#f2f2f2">Device</div>
<div class="t" style="left:1000px;top:647px;width:193px;text-align:right;font-size:12px;color:#f2f2f2">STM32H7xx</div>
<div class="t" style="left:958px;top:672px;font-size:12px;color:#f2f2f2">Type</div>
<div class="t" style="left:1000px;top:672px;width:193px;text-align:right;font-size:12px;color:#f2f2f2">MCU</div>
<div class="t" style="left:958px;top:697px;font-size:12px;color:#f2f2f2">Device ID</div>
<div class="t" style="left:1000px;top:697px;width:193px;text-align:right;font-size:12px;color:#f2f2f2">0x450</div>
<div class="t" style="left:958px;top:722px;font-size:12px;color:#f2f2f2">Flash size</div>
<div class="t" style="left:1000px;top:722px;width:193px;text-align:right;font-size:12px;color:#f2f2f2">2 MB</div>
<div class="t" style="left:958px;top:747px;font-size:12px;color:#f2f2f2">CPU</div>
<div class="t" style="left:1000px;top:747px;width:193px;text-align:right;font-size:12px;color:#f2f2f2">Cortex-M7/M4</div>
</body></html>
